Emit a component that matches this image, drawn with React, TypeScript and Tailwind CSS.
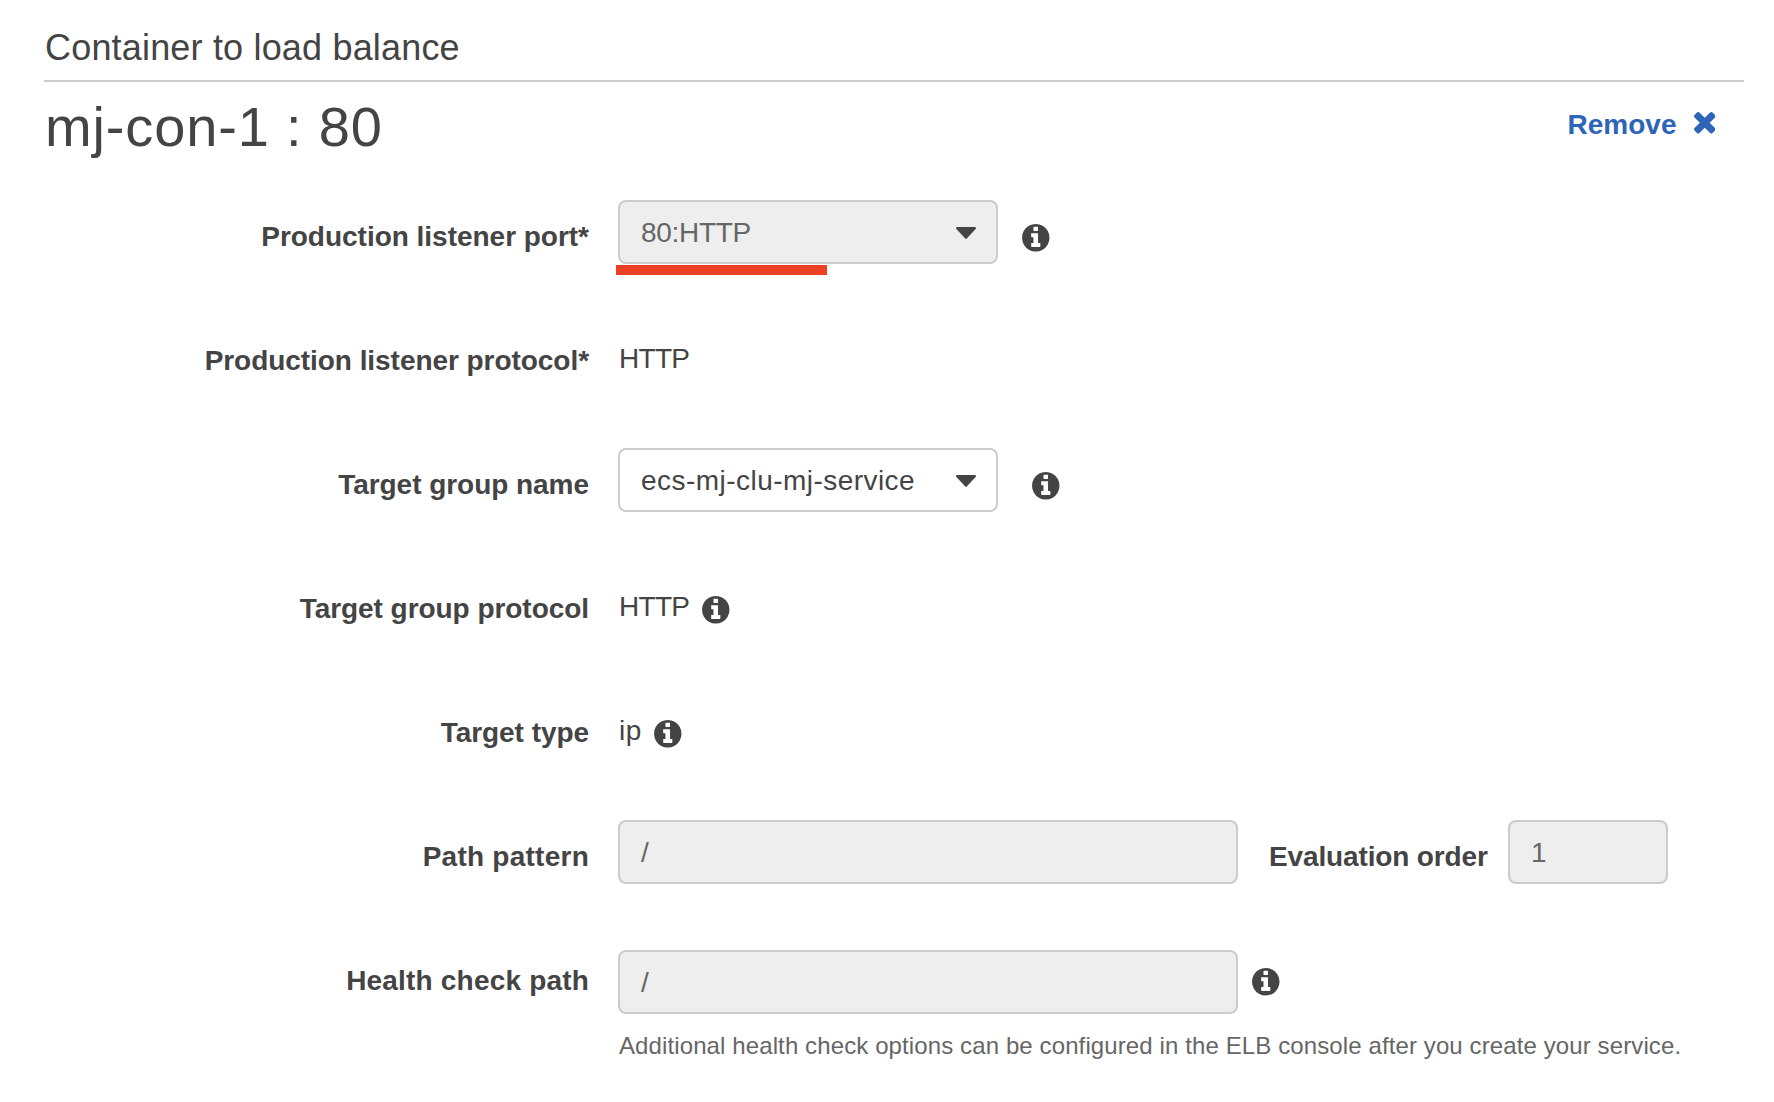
import React from "react";

function InfoIcon({ className = "" }: { className?: string }) {
  return (
    <svg viewBox="128 128 1536 1536" className={"size-[27.5px] shrink-0 fill-[#444] " + className}>
      <path d="M1152 1376v-160q0-14-9-23t-23-9h-96v-512q0-14-9-23t-23-9h-320q-14 0-23 9t-9 23v160q0 14 9 23t23 9h96v320h-96q-14 0-23 9t-9 23v160q0 14 9 23t23 9h448q14 0 23-9t9-23zm-128-896v-160q0-14-9-23t-23-9h-192q-14 0-23 9t-9 23v160q0 14 9 23t23 9h192q14 0 23-9t9-23zm640 416q0 209-103 385.5t-279.5 279.5-385.5 103-385.5-103-279.5-279.5-103-385.5 103-385.5 279.5-279.5 385.5-103 385.5 103 279.5 279.5 103 385.5z" />
    </svg>
  );
}

function CloseIcon() {
  return (
    <svg viewBox="302 366 1188 1188" className="mt-[11px] ml-[17px] size-[21.5px] fill-[#2d65b8]">
      <path d="M1490 1322q0 40-28 68l-136 136q-28 28-68 28t-68-28l-294-294-294 294q-28 28-68 28t-68-28l-136-136q-28-28-28-68t28-68l294-294-294-294q-28-28-28-68t28-68l136-136q28-28 68-28t68 28l294 294 294-294q28-28 68-28t68 28l136 136q28 28 28 68t-28 68l-294 294 294 294q28 28 28 68z" />
    </svg>
  );
}

function Caret() {
  return (
    <svg viewBox="0 0 20 12" className="mt-px h-3 w-5 fill-[#444]">
      <path d="M1.2 0H18.8Q20.6.4 19.6 1.9L11 11.2Q10 12.2 9 11.2L.4 1.9Q-.6.4 1.2 0Z" />
    </svg>
  );
}

function Row({
  label,
  tracking = "",
  children,
}: {
  label: string;
  tracking?: string;
  children: React.ReactNode;
}) {
  return (
    <div className="grid h-[124px] grid-cols-[589px_1fr] items-start gap-x-[29px]">
      <label className={"pt-[17px] text-right font-bold " + tracking}>{label}</label>
      <div className="flex items-start">{children}</div>
    </div>
  );
}

function Select({
  value,
  disabled = false,
  tracking = "",
}: {
  value: string;
  disabled?: boolean;
  tracking?: string;
}) {
  return (
    <div
      className={
        "flex h-16 w-[380px] shrink-0 items-center justify-between rounded-lg border-2 border-[#ccc] pr-5 pl-[21px] " +
        (disabled ? "bg-[#eee] text-[#666]" : "bg-white")
      }
    >
      <span className={"pt-0.5 " + tracking}>{value}</span>
      <Caret />
    </div>
  );
}

function Field({ value, className }: { value: string; className: string }) {
  return (
    <div
      className={
        "flex h-16 shrink-0 items-center rounded-lg border-2 border-[#ccc] bg-[#eee] px-[21px] pt-0.5 text-[#666] " +
        className
      }
    >
      {value}
    </div>
  );
}

export default function App() {
  return (
    <div className="h-[1102px] w-[1774px] overflow-hidden bg-white font-['Liberation_Sans',Arial,sans-serif] text-[28px] leading-10 whitespace-nowrap text-[#444]">
      <h2 className="mr-[30px] ml-11 h-[82px] border-b-2 border-[#ccc] pt-[26px] pl-px text-[36px] leading-[44px] tracking-[0.18px]">
        Container to load balance
      </h2>
      <div className="mr-[59px] ml-11 flex h-[118px] items-start justify-between">
        <h1 className="pt-[13px] pl-px text-[56px] leading-[64px] tracking-[0.85px]">mj-con-1 : 80</h1>
        <button className="mt-[19px] flex items-start font-bold text-[#2d65b8]">
          <span className="pt-1">Remove</span>
          <CloseIcon />
        </button>
      </div>

      <Row label="Production listener port*" tracking="tracking-[-0.02px]">
        <div className="relative">
          <Select value="80:HTTP" disabled tracking="tracking-[-0.3px]" />
          <div className="absolute top-[65px] -left-0.5 h-2.5 w-[211px] bg-[#ec4025]" />
        </div>
        <InfoIcon className="mt-6 ml-6" />
      </Row>
      <Row label="Production listener protocol*" tracking="tracking-[-0.05px]">
        <span className="pt-[15px] pl-px tracking-[-0.7px]">HTTP</span>
      </Row>
      <Row label="Target group name" tracking="tracking-[-0.04px]">
        <Select value="ecs-mj-clu-mj-service" tracking="tracking-[0.46px]" />
        <InfoIcon className="mt-6 ml-[34px]" />
      </Row>
      <Row label="Target group protocol" tracking="tracking-[-0.05px]">
        <span className="w-21 pt-[15px] pl-px tracking-[-0.7px]">HTTP</span>
        <InfoIcon className="mt-6" />
      </Row>
      <Row label="Target type" tracking="tracking-[-0.05px]">
        <span className="w-9 pt-[15px] pl-px tracking-[0.5px]">ip</span>
        <InfoIcon className="mt-6" />
      </Row>
      <Row label="Path pattern" tracking="tracking-[0.25px]">
        <Field value="/" className="w-[620px]" />
        <div className="flex w-[270px] items-start pl-[31px]">
          <label className="pt-[17px] font-bold tracking-[-0.136px]">Evaluation order</label>
        </div>
        <Field value="1" className="w-40" />
      </Row>
      <Row label="Health check path" tracking="tracking-[0.19px]">
        <div className="flex flex-col pt-1.5">
          <div className="flex items-start">
            <Field value="/" className="w-[620px]" />
            <InfoIcon className="mt-[18px] ml-3.5" />
          </div>
          <p className="pt-4 pl-px text-2xl leading-8 tracking-[0.11px] text-[#666]">
            Additional health check options can be configured in the ELB console after you create your service.
          </p>
        </div>
      </Row>
    </div>
  );
}
